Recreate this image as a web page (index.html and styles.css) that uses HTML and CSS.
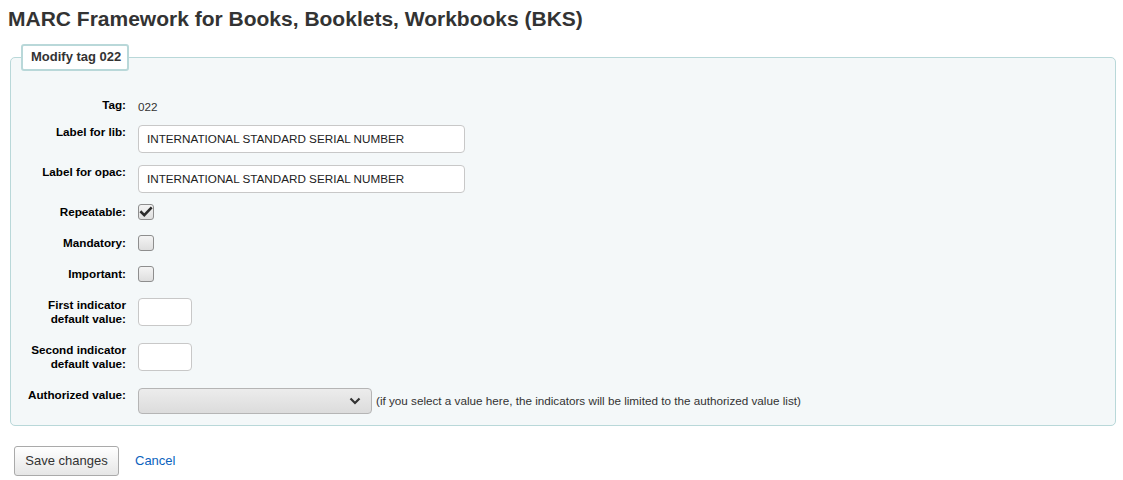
FILE: index.html
```html
<!DOCTYPE html>
<html>
<head>
<meta charset="utf-8">
<link rel="stylesheet" href="styles.css">
</head>
<body>
<h1 class="title">MARC Framework for Books, Booklets, Workbooks (BKS)</h1>
<form class="form">
  <fieldset class="rows">
    <legend class="legend">Modify tag 022</legend>
    <ol class="list">
      <li class="row row-tag"><span class="lbl">Tag:</span><span class="val">022</span></li>
      <li class="row row-input"><label class="lbl">Label for lib:</label><span class="text-input wide">INTERNATIONAL STANDARD SERIAL NUMBER</span></li>
      <li class="row row-input"><label class="lbl">Label for opac:</label><span class="text-input wide">INTERNATIONAL STANDARD SERIAL NUMBER</span></li>
      <li class="row row-check"><label class="lbl">Repeatable:</label><span class="check"><svg width="14" height="14" viewBox="0 0 14 14"><path d="M2.3 7.2 L5.3 10.2 L11.8 3.4" fill="none" stroke="#2b2b2b" stroke-width="2.6" stroke-linecap="square"/></svg></span></li>
      <li class="row row-check"><label class="lbl">Mandatory:</label><span class="check"></span></li>
      <li class="row row-check"><label class="lbl">Important:</label><span class="check"></span></li>
      <li class="row row-ind"><label class="lbl two">First indicator<br>default value:</label><span class="text-input small"></span></li>
      <li class="row row-ind"><label class="lbl two">Second indicator<br>default value:</label><span class="text-input small"></span></li>
      <li class="row row-select"><label class="lbl">Authorized value:</label><span class="select"><svg width="12" height="8" viewBox="0 0 12 8"><path d="M1.5 1.5 L6 6 L10.5 1.5" fill="none" stroke="#333" stroke-width="2.2"/></svg></span><span class="hint">(if you select a value here, the indicators will be limited to the authorized value list)</span></li>
    </ol>
  </fieldset>
  <div class="actions">
    <span class="btn">Save changes</span>
    <a class="cancel" href="#">Cancel</a>
  </div>
</form>
</body>
</html>
```

FILE: styles.css
```css
html, body {
  margin: 0;
  padding: 0;
  background: #fff;
}
body {
  font-family: "Liberation Sans", Arial, sans-serif;
  color: #000;
  padding: 0 8px;
}
.title {
  margin: 0;
  padding-top: 6px;
  font-size: 21px;
  line-height: 26px;
  font-weight: bold;
  color: #333;
}
.form {
  margin: 0;
}
.rows {
  margin: 12px 0 0 2px;
  width: 1106px;
  box-sizing: border-box;
  height: 382px;
  border: 1px solid #b9d8d9;
  border-radius: 5px;
  background: #f4f8f9;
  padding: 0;
}
.legend {
  margin-left: 10px;
  padding: 3px 6px 4px 8px;
  background: #fff;
  border: 2px solid #b9d8d9;
  border-radius: 3px;
  font-size: 13px;
  line-height: 16px;
  font-weight: bold;
  color: #333;
}
.list {
  list-style: none;
  margin: 0;
  padding: 0;
}
.row {
  display: flex;
  align-items: flex-start;
  font-size: 11.7px;
}
.lbl {
  width: 115px;
  flex: none;
  text-align: right;
  font-weight: bold;
  line-height: 14px;
  margin-right: 12px;
  color: #000;
}
.row-tag {
  margin-top: 27px;
  line-height: 14px;
}
.row-tag .val {
  padding-top: 2px;
  color: #333;
}
.row-input {
  margin-top: 12px;
}
.row-tag + .row-input {
  margin-top: 11px;
}
.row-input .lbl {
  padding-top: 0;
}
.text-input {
  display: block;
  box-sizing: border-box;
  background: #fff;
  border: 1px solid #c8c8c8;
  border-radius: 4px;
  height: 28px;
  line-height: 26px;
  padding: 0 8px;
  color: #222;
}
.text-input.wide {
  width: 327px;
}
.text-input.small {
  width: 54px;
}
.row-check {
  align-items: center;
  height: 16px;
}
.row-check:nth-child(4) { margin-top: 11px; }
.row-check + .row-check { margin-top: 15px; }
.check {
  display: flex;
  align-items: center;
  justify-content: center;
  box-sizing: border-box;
  width: 16px;
  height: 16px;
  border: 1px solid #8e8e8e;
  border-radius: 3px;
  background: linear-gradient(#f4f4f4, #dedede);
}
.row-ind {
  margin-top: 16px;
}
.row-ind + .row-ind { margin-top: 17px; }
.row-ind .lbl {
  padding-top: 0;
}
.row-select {
  margin-top: 17px;
}
.row-select .lbl {
  padding-top: 0;
}
.select {
  display: flex;
  align-items: center;
  justify-content: flex-end;
  box-sizing: border-box;
  width: 234px;
  height: 26px;
  padding-right: 10px;
  border: 1px solid #b5b5b5;
  border-radius: 4px;
  background: linear-gradient(#ececec, #dcdcdc);
}
.hint {
  margin-left: 4px;
  padding-top: 6px;
  line-height: 14px;
  color: #333;
}
.actions {
  display: flex;
  align-items: center;
  margin-top: 20px;
  padding-left: 6px;
}
.btn {
  display: inline-block;
  box-sizing: border-box;
  width: 105px;
  height: 30px;
  line-height: 28px;
  text-align: center;
  font-size: 13px;
  color: #333;
  border: 1px solid #aaa;
  border-radius: 3px;
  background: linear-gradient(#fff, #e6e6e6);
}
.cancel {
  margin-left: 16px;
  font-size: 13px;
  color: #0b63be;
  text-decoration: none;
  margin-top: -2px;
}
```
